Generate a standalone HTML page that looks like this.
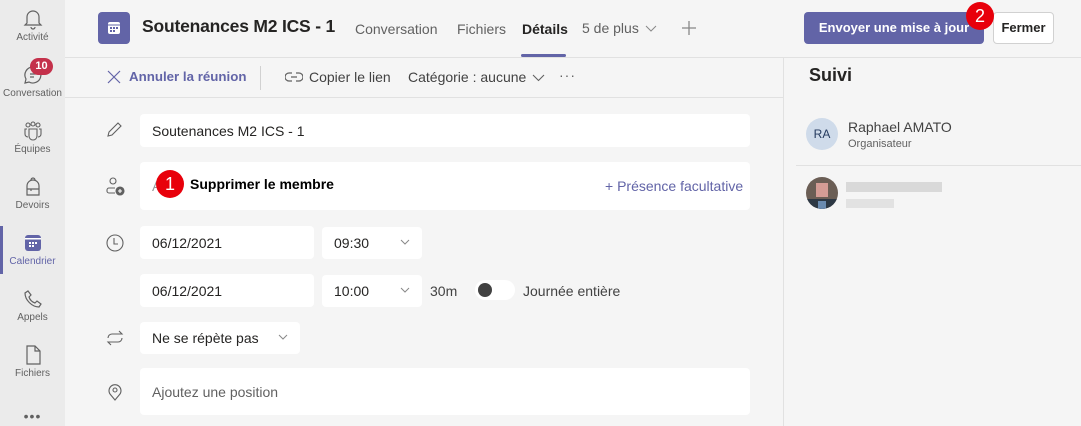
<!DOCTYPE html>
<html><head><meta charset="utf-8"><style>
*{box-sizing:border-box;margin:0;padding:0}
body{width:1081px;height:426px;overflow:hidden;background:#f5f5f5;font-family:"Segoe UI","Liberation Sans",sans-serif;color:#252423;position:relative}
.a{position:absolute}
.side{left:0;top:0;width:65px;height:426px;background:#ebebeb}
.nav{position:absolute;left:0;width:65px;text-align:center;font-size:10px;color:#616161}
.nav svg{display:block;margin:0 auto 2px}
.box{position:absolute;background:#fff;border-radius:4px;font-size:14px;color:#252423;padding-left:12px;display:flex;align-items:center}
.ic{position:absolute;left:105px}
.chev{position:absolute;right:12px;top:50%;margin-top:-4px}
.red{position:absolute;width:28px;height:28px;border-radius:50%;background:#e8000b;color:#fff;font-size:18px;text-align:center;line-height:28px;font-family:"Liberation Sans",sans-serif}
.blur{position:absolute;background:#d9d9d9}
</style></head><body>
<div class="a side"></div>
<div class="a" style="left:0;top:226px;width:3px;height:48px;background:#6264a7"></div>

<div class="nav" style="top:8px"><svg width="20" height="22" viewBox="0 0 20 22" fill="none" stroke="#616161" stroke-width="1.2"><path d="M4 15V9a6 6 0 0 1 12 0v6l2 2H2z"/><path d="M8 19a2 2 0 0 0 4 0"/></svg>Activité</div>
<div class="nav" style="top:64px"><svg width="22" height="22" viewBox="0 0 22 22" fill="none" stroke="#616161" stroke-width="1.2"><path d="M11 3a8 8 0 1 1-4 15l-4 1 1-4a8 8 0 0 1 7-12z"/><path d="M8 10h6M8 13h4"/></svg>Conversation</div>
<div class="a" style="left:30px;top:58px;width:23px;height:17px;border-radius:9px;background:#c4314b;color:#fff;font-size:11px;font-weight:bold;text-align:center;line-height:17px;font-family:'Liberation Sans',sans-serif">10</div>
<div class="nav" style="top:120px"><svg width="22" height="22" viewBox="0 0 22 22" fill="none" stroke="#616161" stroke-width="1.1"><circle cx="6" cy="5" r="2"/><circle cx="11" cy="4" r="2"/><circle cx="16" cy="5" r="2"/><path d="M7 9h8v7a4 4 0 0 1-8 0z"/><path d="M5 9H3v5a3 3 0 0 0 3 3M17 9h2v5a3 3 0 0 1-3 3"/></svg>Équipes</div>
<div class="nav" style="top:176px"><svg width="20" height="22" viewBox="0 0 20 22" fill="none" stroke="#616161" stroke-width="1.2"><path d="M8 4a2 2 0 0 1 4 0"/><path d="M4 10a6 6 0 0 1 12 0v9H4z"/><path d="M4 13h12M8 13v2"/></svg>Devoirs</div>
<div class="nav" style="top:232px;color:#6264a7"><svg width="22" height="22" viewBox="0 0 22 22"><rect x="3" y="3" width="16" height="16" rx="3" fill="#6264a7"/><rect x="3" y="6" width="16" height="1.5" fill="#fff"/><g fill="#fff"><rect x="7" y="10" width="2" height="2"/><rect x="10" y="10" width="2" height="2"/><rect x="13" y="10" width="2" height="2"/><rect x="7" y="13" width="2" height="2"/><rect x="10" y="13" width="2" height="2"/></g></svg>Calendrier</div>
<div class="nav" style="top:288px"><svg width="22" height="22" viewBox="0 0 22 22" fill="none" stroke="#616161" stroke-width="1.2"><path d="M6 3l3 4-2 2c1 3 3 5 6 6l2-2 4 3-2 3C10 19 3 12 3 5z"/></svg>Appels</div>
<div class="nav" style="top:344px"><svg width="20" height="22" viewBox="0 0 20 22" fill="none" stroke="#616161" stroke-width="1.2"><path d="M4 2h8l5 5v13H4z"/><path d="M12 2v5h5"/></svg>Fichiers</div>
<div class="nav" style="top:408px;font-size:14px;letter-spacing:1px">•••</div>

<!-- header -->
<div class="a" style="left:98px;top:12px;width:32px;height:32px;background:#6264a7;border-radius:4px"><svg width="32" height="32" viewBox="0 0 32 32"><rect x="10" y="10" width="12" height="12" rx="2" fill="#fff"/><rect x="10" y="12.5" width="12" height="1" fill="#6264a7"/><g fill="#6264a7"><rect x="12" y="15" width="2" height="2"/><rect x="15" y="15" width="2" height="2"/><rect x="18" y="15" width="2" height="2"/><rect x="12" y="18" width="2" height="2"/><rect x="15" y="18" width="2" height="2"/></g></svg></div>
<div class="a" style="left:142px;top:16px;font-size:17.5px;font-weight:bold;color:#252423;letter-spacing:-0.2px">Soutenances M2 ICS - 1</div>
<div class="a" style="left:355px;top:21px;font-size:14px;color:#616161">Conversation</div>
<div class="a" style="left:457px;top:21px;font-size:14px;color:#616161">Fichiers</div>
<div class="a" style="left:522px;top:21px;font-size:14px;font-weight:bold;color:#252423">Détails</div>
<div class="a" style="left:521px;top:54px;width:45px;height:3px;background:#6264a7;border-radius:2px"></div>
<div class="a" style="left:582px;top:20px;font-size:14px;color:#616161">5 de plus</div>
<svg class="a" style="left:645px;top:25px" width="12" height="8" viewBox="0 0 12 8" fill="none" stroke="#888" stroke-width="1"><path d="M1 1l5 5 5-5"/></svg>
<svg class="a" style="left:681px;top:20px" width="16" height="16" viewBox="0 0 16 16" stroke="#888" stroke-width="1.3"><path d="M8 1v14M1 8h14"/></svg>
<div class="a" style="left:804px;top:12px;width:180px;height:32px;background:#6264a7;border-radius:4px;color:#fff;font-size:13px;font-weight:bold;text-align:center;line-height:32px">Envoyer une mise à jour</div>
<div class="a" style="left:993px;top:12px;width:61px;height:32px;background:#fff;border:1px solid #d1d1d1;border-radius:4px;font-size:13px;font-weight:bold;text-align:center;line-height:30px">Fermer</div>
<div class="red" style="left:966px;top:2px">2</div>

<div class="a" style="left:65px;top:57px;width:1016px;height:1px;background:#e1e1e1"></div>
<div class="a" style="left:65px;top:97px;width:718px;height:1px;background:#e1e1e1"></div>
<div class="a" style="left:783px;top:57px;width:1px;height:369px;background:#e1e1e1"></div>

<!-- toolbar -->
<svg class="a" style="left:107px;top:70px" width="14" height="14" viewBox="0 0 14 14" stroke="#6264a7" stroke-width="1.2"><path d="M1 1l12 12M13 1L1 13"/></svg>
<div class="a" style="left:129px;top:69px;font-size:13.3px;font-weight:bold;color:#6264a7">Annuler la réunion</div>
<div class="a" style="left:260px;top:66px;width:1px;height:24px;background:#d1d1d1"></div>
<svg class="a" style="left:285px;top:72px" width="18" height="10" viewBox="0 0 18 10" fill="none" stroke="#616161" stroke-width="1.2"><path d="M7 1H4a4 4 0 0 0 0 8h3M11 1h3a4 4 0 0 1 0 8h-3M6 5h6"/></svg>
<div class="a" style="left:309px;top:69px;font-size:14px;color:#424242">Copier le lien</div>
<div class="a" style="left:408px;top:69px;font-size:14px;color:#424242">Catégorie : aucune</div>
<svg class="a" style="left:532px;top:74px" width="13" height="8" viewBox="0 0 13 8" fill="none" stroke="#616161" stroke-width="1.1"><path d="M1 1l5.5 5.5L12 1"/></svg>
<div class="a" style="left:559px;top:67px;font-size:14px;color:#616161;letter-spacing:1px">···</div>

<!-- form -->
<svg class="ic" style="top:121px" width="18" height="18" viewBox="0 0 18 18" fill="none" stroke="#616161" stroke-width="1.1"><path d="M3 15l1-4L13 2l3 3-9 9z"/></svg>
<div class="box" style="left:140px;top:114px;width:610px;height:33px">Soutenances M2 ICS - 1</div>

<svg class="ic" style="top:176px" width="20" height="20" viewBox="0 0 20 20" fill="none" stroke="#616161" stroke-width="1.1"><circle cx="8" cy="5" r="3"/><path d="M10 12H4a2 2 0 0 0-2 2v1a2 2 0 0 0 2 2h6"/><circle cx="15" cy="15" r="4" fill="#616161"/><path d="M15 13v4M13 15h4" stroke="#fff"/></svg>
<div class="box" style="left:140px;top:162px;width:610px;height:48px;color:#999">A</div>
<div class="red" style="left:156px;top:170px">1</div>
<div class="a" style="left:190px;top:176px;font-family:'Liberation Sans',sans-serif;font-size:14px;font-weight:bold;color:#000">Supprimer le membre</div>
<div class="a" style="left:605px;top:178px;font-size:14px;color:#6264a7">+ Présence facultative</div>

<svg class="ic" style="top:233px" width="20" height="20" viewBox="0 0 20 20" fill="none" stroke="#616161" stroke-width="1.1"><circle cx="10" cy="10" r="8"/><path d="M9 5v6h4"/></svg>
<div class="box" style="left:140px;top:226px;width:174px;height:33px">06/12/2021</div>
<div class="box" style="left:322px;top:227px;width:100px;height:32px">09:30<svg class="chev" width="10" height="6" viewBox="0 0 10 6" fill="none" stroke="#888"><path d="M1 1l4 4 4-4"/></svg></div>
<div class="box" style="left:140px;top:274px;width:174px;height:33px">06/12/2021</div>
<div class="box" style="left:322px;top:275px;width:100px;height:32px">10:00<svg class="chev" width="10" height="6" viewBox="0 0 10 6" fill="none" stroke="#888"><path d="M1 1l4 4 4-4"/></svg></div>
<div class="a" style="left:430px;top:283px;font-size:14px;color:#424242">30m</div>
<div class="a" style="left:475px;top:280px;width:40px;height:20px;border-radius:10px;background:#fff"></div>
<div class="a" style="left:478px;top:283px;width:14px;height:14px;border-radius:50%;background:#424242"></div>
<div class="a" style="left:523px;top:283px;font-size:14px;color:#424242">Journée entière</div>

<svg class="ic" style="top:329px" width="20" height="18" viewBox="0 0 20 18" fill="none" stroke="#616161" stroke-width="1.1"><path d="M3 9a4 4 0 0 1 4-4h10l-3-3M17 9a4 4 0 0 1-4 4H3l3 3"/></svg>
<div class="box" style="left:140px;top:322px;width:160px;height:32px">Ne se répète pas<svg class="chev" width="10" height="6" viewBox="0 0 10 6" fill="none" stroke="#888"><path d="M1 1l4 4 4-4"/></svg></div>

<svg class="ic" style="top:382px" width="20" height="20" viewBox="0 0 20 20" fill="none" stroke="#616161" stroke-width="1.1"><path d="M10 18l-5-6a6 6 0 1 1 10 0z"/><circle cx="10" cy="8" r="2"/></svg>
<div class="box" style="left:140px;top:368px;width:610px;height:47px;color:#616161">Ajoutez une position</div>

<!-- right panel -->
<div class="a" style="left:809px;top:65px;font-size:18px;font-weight:bold">Suivi</div>
<div class="a" style="left:806px;top:118px;width:32px;height:32px;border-radius:50%;background:#cfdbea;color:#243a5e;font-size:12px;text-align:center;line-height:32px">RA</div>
<div class="a" style="left:848px;top:119px;font-size:14px;color:#424242">Raphael AMATO</div>
<div class="a" style="left:848px;top:138px;font-size:11px;color:#616161">Organisateur</div>
<div class="a" style="left:796px;top:165px;width:285px;height:1px;background:#e1e1e1"></div>
<div class="a" style="left:806px;top:177px;width:32px;height:32px;border-radius:50%;overflow:hidden;background:#6b5e55">
<div class="a" style="left:10px;top:6px;width:12px;height:14px;background:#d49c95"></div>
<div class="a" style="left:0;top:22px;width:32px;height:10px;background:#2d3844"></div>
<div class="a" style="left:12px;top:24px;width:8px;height:8px;background:#6a8bb0"></div></div>
<div class="blur" style="left:846px;top:182px;width:96px;height:10px"></div>
<div class="blur" style="left:846px;top:199px;width:48px;height:9px;background:#e2e2e2"></div>
</body></html>
